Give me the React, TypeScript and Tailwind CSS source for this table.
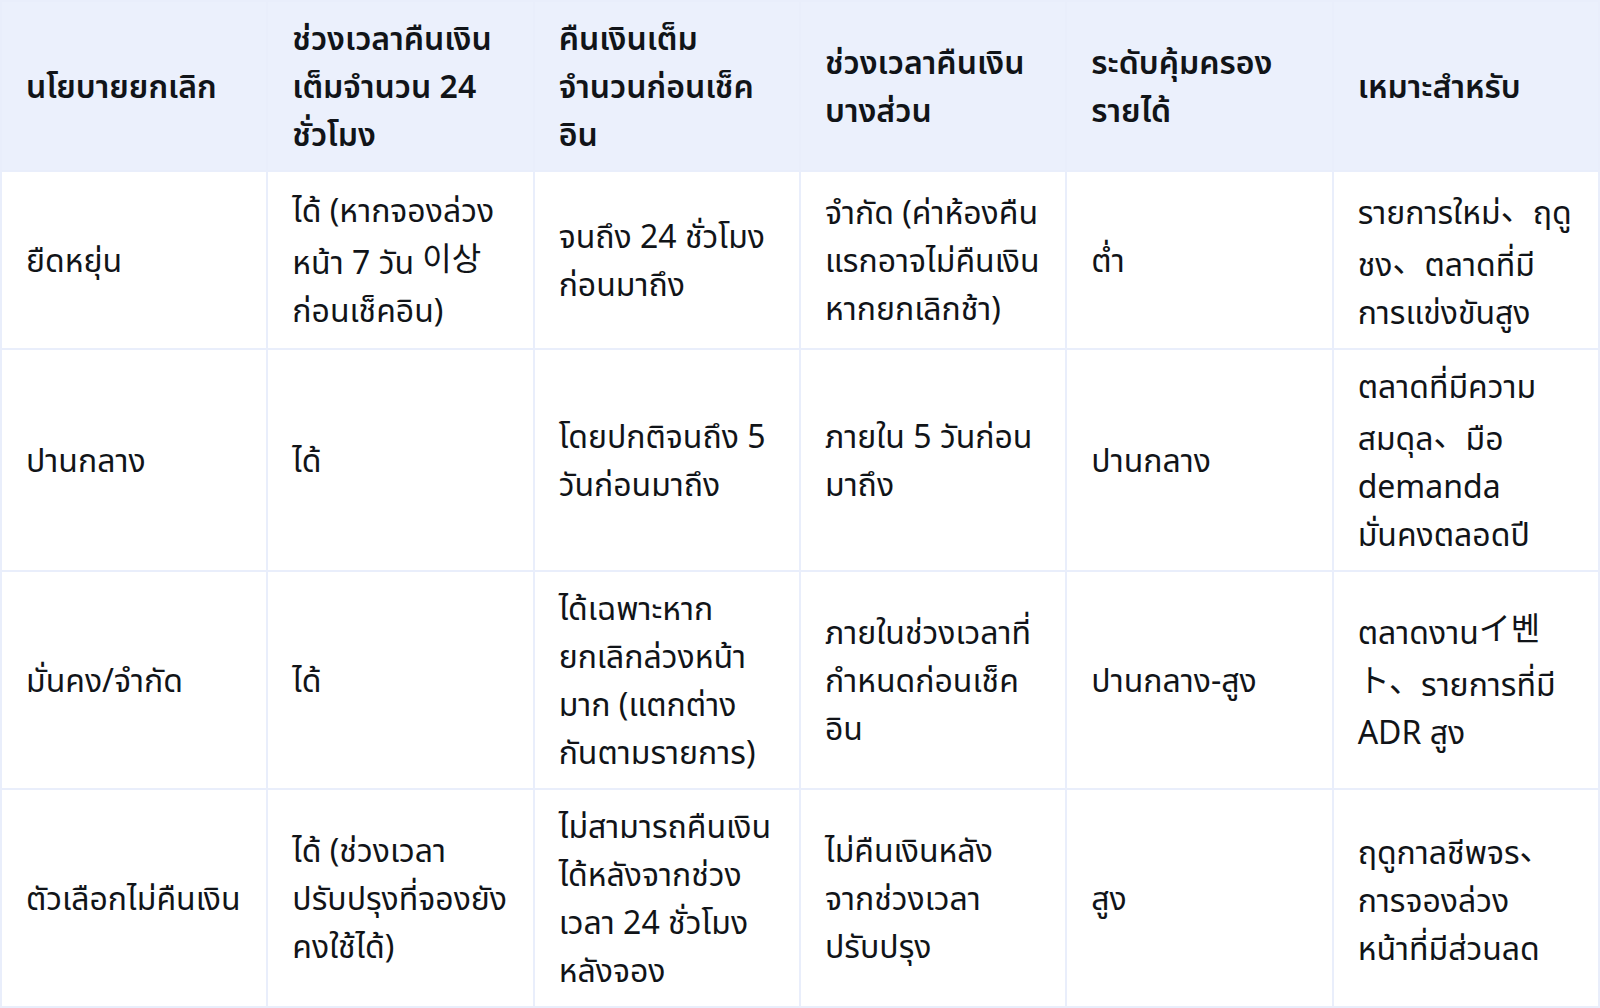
const HEAD = [
  'นโยบายยกเลิก',
  'ช่วงเวลาคืนเงินเต็มจำนวน 24 ชั่วโมง',
  'คืนเงินเต็มจำนวนก่อนเช็คอิน',
  'ช่วงเวลาคืนเงินบางส่วน',
  'ระดับคุ้มครองรายได้',
  'เหมาะสำหรับ',
];

const ROWS: string[][] = [
  [
    'ยืดหยุ่น',
    'ได้ (หากจองล่วงหน้า 7 วัน 이상ก่อนเช็คอิน)',
    'จนถึง 24 ชั่วโมงก่อนมาถึง',
    'จำกัด (ค่าห้องคืนแรกอาจไม่คืนเงินหากยกเลิกช้า)',
    'ต่ำ',
    'รายการใหม่、ฤดูชง、ตลาดที่มีการแข่งขันสูง',
  ],
  [
    'ปานกลาง',
    'ได้',
    'โดยปกติจนถึง 5 วันก่อนมาถึง',
    'ภายใน 5 วันก่อนมาถึง',
    'ปานกลาง',
    'ตลาดที่มีความสมดุล、มือ demanda มั่นคงตลอดปี',
  ],
  [
    'มั่นคง/จำกัด',
    'ได้',
    'ได้เฉพาะหากยกเลิกล่วงหน้ามาก (แตกต่างกันตามรายการ)',
    'ภายในช่วงเวลาที่กำหนดก่อนเช็คอิน',
    'ปานกลาง-สูง',
    'ตลาดงานイ벤ト、รายการที่มี ADR สูง',
  ],
  [
    'ตัวเลือกไม่คืนเงิน',
    'ได้ (ช่วงเวลาปรับปรุงที่จองยังคงใช้ได้)',
    'ไม่สามารถคืนเงินได้หลังจากช่วงเวลา 24 ชั่วโมงหลังจอง',
    'ไม่คืนเงินหลังจากช่วงเวลาปรับปรุง',
    'สูง',
    'ฤดูกาลชีพจร、การจองล่วงหน้าที่มีส่วนลด',
  ],
];

// CJK bits (、 イ 벤 이상) push their line down a little, like the original
const CJK = /([\u3000-\u303f\u3040-\u30ff\uac00-\ud7af]+)/;

function Cell({ text }: { text: string }) {
  return (
    <>
      {text.split(CJK).map((part, i) =>
        i % 2 === 1 ? (
          <span key={i} className="align-[4px]">{part}</span>
        ) : (
          part
        ),
      )}
    </>
  );
}

export default function App() {
  return (
    <div className="min-h-screen bg-white font-['Noto_Sans','Noto_Sans_Thai','Noto_Sans_CJK_KR','Noto_Sans_CJK_JP',sans-serif] text-[32px] leading-[1.5] text-[#111418]">
      <table className="w-full table-fixed border-collapse border-2 border-[#e9eefb]">
        <thead>
          <tr className="bg-[#ebf0fc]">
            {HEAD.map((h) => (
              <th key={h} className="border-2 border-[#e9eefb] px-6 py-3 text-left align-middle font-semibold">
                {h}
              </th>
            ))}
          </tr>
        </thead>
        <tbody>
          {ROWS.map((r, i) => (
            <tr key={i}>
              {r.map((c, j) => (
                <td key={j} className="border-2 border-[#e9eefb] px-6 py-3 align-middle font-normal">
                  <Cell text={c} />
                </td>
              ))}
            </tr>
          ))}
        </tbody>
      </table>
    </div>
  );
}
